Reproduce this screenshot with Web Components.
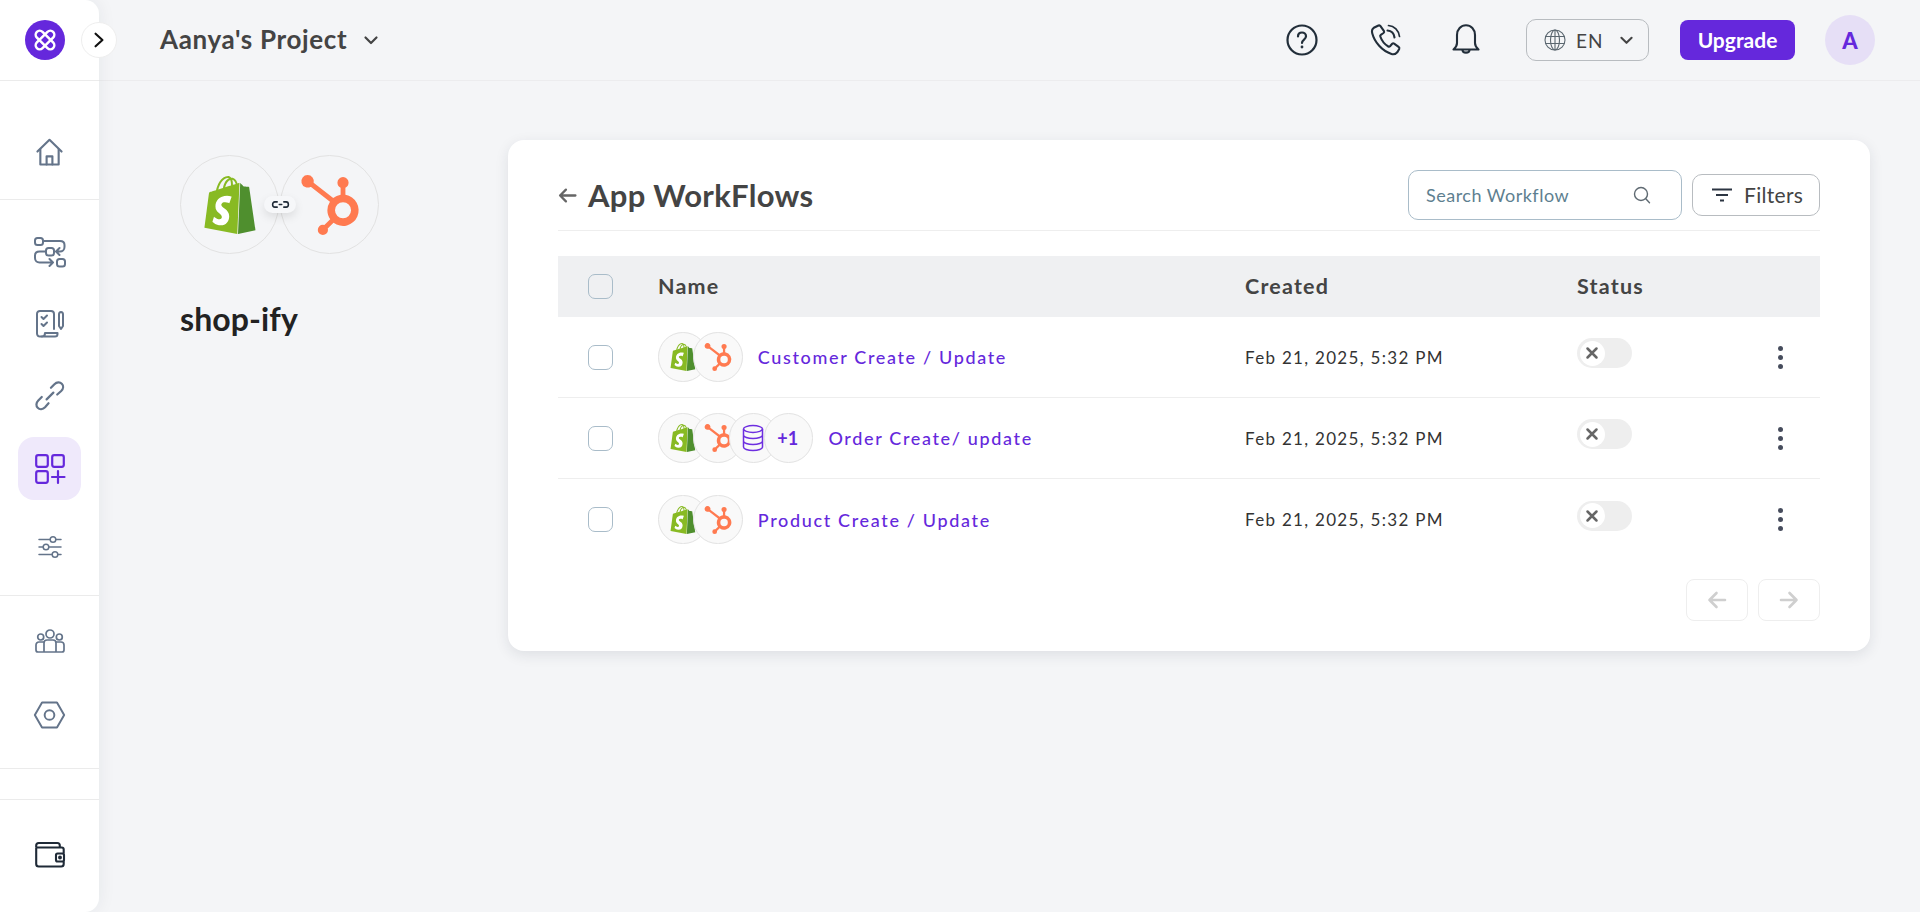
<!DOCTYPE html>
<html lang="en">
<head>
<meta charset="utf-8">
<title>App WorkFlows</title>
<style>
html,body{margin:0;padding:0;height:912px;background:#f4f5f7;overflow:hidden;font-family:"Lato","Liberation Sans",sans-serif;}
</style>
</head>
<body>
<app-shell>
  <side-nav slot="nav"></side-nav>
  <top-bar slot="top"></top-bar>
  <app-summary slot="aside" name="shop-ify"></app-summary>
  <workflow-card slot="main">
    <workflow-row name="Customer Create / Update" created="Feb 21, 2025, 5:32 PM" apps="shopify,hubspot"></workflow-row>
    <workflow-row name="Order Create/ update" created="Feb 21, 2025, 5:32 PM" apps="shopify,hubspot,db,+1"></workflow-row>
    <workflow-row name="Product Create / Update" created="Feb 21, 2025, 5:32 PM" apps="shopify,hubspot" last></workflow-row>
  </workflow-card>
</app-shell>
<script>
const SHOP_DARK='M15.337 23.979l7.216-1.561s-2.604-17.613-2.625-17.73c-.018-.116-.114-.192-.211-.192s-1.929-.136-1.929-.136-1.275-1.274-1.439-1.411c-.045-.037-.075-.057-.121-.074l-.914 21.104h.023z';
const SHOP_S='M11.71 11.305s-.81-.424-1.774-.424c-1.447 0-1.504.906-1.504 1.141 0 1.232 3.24 1.715 3.24 4.629 0 2.295-1.44 3.76-3.406 3.76-2.354 0-3.54-1.465-3.54-1.465l.646-2.086s1.245 1.066 2.28 1.066c.675 0 .975-.545.975-.932 0-1.619-2.654-1.694-2.654-4.359-.034-2.237 1.571-4.416 4.827-4.416 1.257 0 1.875.361 1.875.361l-.945 2.715-.02.01z';
const SHOP_L='M11.17.83c.136 0 .271.038.405.135-.984.465-2.064 1.639-2.508 3.992-.656.213-1.293.405-1.889.578C7.697 3.75 8.951.84 11.17.84V.83zm1.235 2.949v.135c-.754.232-1.583.484-2.394.736.466-1.777 1.333-2.645 2.085-2.971.193.501.309 1.176.309 2.1zm.539-2.234c.694.074 1.141.867 1.429 1.755-.349.114-.735.231-1.158.366v-.252c0-.752-.096-1.371-.271-1.871v.002zm2.992 1.289c-.02 0-.06.021-.078.021s-.289.075-.714.21c-.423-1.233-1.176-2.37-2.508-2.37h-.115C12.135.209 11.669 0 11.265 0 8.159 0 6.675 3.877 6.21 5.846c-1.194.365-2.063.636-2.16.674-.675.213-.694.232-.772.87-.075.462-1.83 14.063-1.83 14.063L15.009 24l.927-21.166z';
const HUB='M18.164 7.93V5.084a2.198 2.198 0 001.267-1.978v-.067A2.2 2.2 0 0017.238.845h-.067a2.2 2.2 0 00-2.193 2.193v.067a2.196 2.196 0 001.252 1.973l.013.006v2.852a6.22 6.22 0 00-2.969 1.31l.012-.009-7.828-6.096a2.497 2.497 0 10-1.157 1.52l-.012.006 7.696 5.991a6.176 6.176 0 00-1.038 3.446c0 1.343.425 2.588 1.147 3.607l-.013-.02-2.342 2.343a1.968 1.968 0 00-.58-.095h-.002a2.033 2.033 0 102.033 2.033 1.978 1.978 0 00-.1-.595l.005.014 2.317-2.317a6.247 6.247 0 104.782-11.134l-.036-.005zm-.964 9.378a3.206 3.206 0 113.215-3.207v.002a3.206 3.206 0 01-3.207 3.207z';
const ICONS={
 shopify:`<svg viewBox="0 0 24 24"><path fill="#fff" d="${SHOP_S}"/><path fill="#88BA23" d="${SHOP_S}${SHOP_L}"/><path fill="#4F8F2E" d="${SHOP_DARK}"/></svg>`,
 hubspot:`<svg viewBox="0 0 24 24"><path fill="#FF7A50" d="${HUB}"/></svg>`,
 db:`<svg viewBox="0 0 22 28" fill="none" stroke="#6d2ee0" stroke-width="1.5"><ellipse cx="11" cy="5" rx="9.5" ry="3.4"/><path d="M1.5 5v18c0 2 4.2 3.6 9.5 3.6s9.5-1.6 9.5-3.6V5M1.5 11c0 2 4.2 3.6 9.5 3.6s9.5-1.6 9.5-3.6M1.5 17c0 2 4.2 3.6 9.5 3.6s9.5-1.6 9.5-3.6"/></svg>`,
 logo:`<svg viewBox="0 0 40 40"><circle cx="20" cy="20" r="20" fill="#6528dc"/><g fill="none" stroke="#fff" stroke-width="2.5"><rect x="8.5" y="16" width="23" height="8" rx="4" transform="rotate(45 20 20)"/><rect x="8.5" y="16" width="23" height="8" rx="4" transform="rotate(-45 20 20)"/></g></svg>`,
 home:`<svg viewBox="0 0 28 30" fill="none" stroke="#64748a" stroke-width="2.2" stroke-linejoin="round" stroke-linecap="round"><path d="M1.5 14L14 1.8 26.5 14"/><path d="M4.5 12v15.5h19V12"/><path d="M11 27.5v-8.5h6v8.5"/></svg>`,
 flow:`<svg viewBox="0 0 32 30" fill="none" stroke="#64748a" stroke-width="2" stroke-linejoin="round" stroke-linecap="round"><rect x="1" y="1" width="8" height="7" rx="2.5"/><path d="M9 4h17c2.5 0 4.5 1.5 4.5 4v2c0 2.7-2 4.5-4.5 4.5h-3M25.5 11l-3.5 3.5 3.5 3.500"/><rect x="12" y="11" width="8" height="7.5" rx="2.5"/><path d="M12 14.500H5.500C3 14.500 1 16 1 18.500V21c0 2.800 2 4.500 4.500 4.500H19M15.500 22l3.500 3.500-3.500 3.500"/><rect x="23" y="22" width="8" height="7.5" rx="2.5"/></svg>`,
 tasks:`<svg viewBox="0 0 28 29" fill="none" stroke="#64748a" stroke-width="2" stroke-linejoin="round" stroke-linecap="round"><path d="M6 27.500H4c-1.800 0-3-1.200-3-3V5c0-1.800 1.200-3 3-3h11c1.800 0 3 1.200 3 3v15"/><path d="M5.500 8l2 2 3.500-3.500M5.500 15l2 2 3.500-3.500"/><path d="M6 27.500c2 0 3-1.200 3-3.500h12.500v1c0 1.500-1 2.500-2.500 2.500z"/><path d="M23 5.500c0-1.500 1-2.500 2-2.500s2 1 2 2.500v11.500l-2 3-2-3z"/></svg>`,
 link:`<svg viewBox="0 0 30 30" fill="none" stroke="#64748a" stroke-width="2.300" stroke-linecap="round"><path d="M12 19l7-7"/><path d="M16.500 7l3.600-3.600c2.500-2.500 5.800-2.400 7.600-.6 2 2 1.800 5.200-.6 7.600L23 14"/><path d="M7 16.500l-3.600 3.600c-2.500 2.500-2.400 5.800-.6 7.600 2 2 5.200 1.800 7.600-.6L14 23"/></svg>`,
 apps:`<svg viewBox="0 0 30 30" fill="none" stroke="#6528dc" stroke-width="2.200" stroke-linecap="round" stroke-linejoin="round"><rect x="1.200" y="1.200" width="11.600" height="11.600" rx="2"/><rect x="17.200" y="1.200" width="11.600" height="11.600" rx="2"/><rect x="1.200" y="17.200" width="11.600" height="11.600" rx="2"/><path d="M23 17v12M17 23h12.500"/></svg>`,
 sliders:`<svg viewBox="0 0 24 22" fill="none" stroke="#64748a" stroke-width="1.500" stroke-linecap="round"><path d="M1 3.500h11M18 3.500h5M1 11h4M11 11h12M1 18.500h13M20 18.500h3"/><circle cx="15" cy="3.500" r="2.800"/><circle cx="8" cy="11" r="2.800"/><circle cx="17" cy="18.500" r="2.800"/></svg>`,
 team:`<svg viewBox="0 0 30 24" fill="none" stroke="#64748a" stroke-width="1.700" stroke-linejoin="round"><circle cx="15" cy="5" r="4"/><circle cx="5.700" cy="8" r="3"/><circle cx="24.300" cy="8" r="3"/><path d="M9 23v-9c0-1.500 1-3 3-3h6c2 0 3 1.500 3 3v9"/><path d="M9 13H4c-1.800 0-3 1.200-3 3v5c0 1.300.8 2 2 2h24c1.200 0 2-.7 2-2v-5c0-1.800-1.200-3-3-3h-5"/></svg>`,
 hex:`<svg viewBox="0 0 34 30" fill="none" stroke="#64748a" stroke-width="2.100" stroke-linejoin="round"><path d="M1.300 15L9 1.500h16L32.700 15 25 28.500H9z"/><circle cx="17" cy="15" r="5.200"/></svg>`,
 wallet:`<svg viewBox="0 0 30 26" fill="none" stroke="#1f2a37" stroke-width="2.100" stroke-linejoin="round"><path d="M1.200 5.500V3.500C1.200 2 2.200 1 3.700 1h18.600c1.500 0 2.500 1 2.500 2.500v2"/><path d="M1.200 5.500h25.500c1.200 0 2 .8 2 2v4M28.700 19.500V22c0 1.500-1 2.500-2.500 2.500H3.700c-1.500 0-2.500-1-2.500-2.500V5.500"/><rect x="21" y="11.500" width="8" height="8" rx="1.500"/><circle cx="25" cy="15.500" r=".9" fill="#1f2a37"/></svg>`,
 help:`<svg viewBox="0 0 32 32" fill="none" stroke="#222e3a" stroke-width="2.200" stroke-linecap="round"><circle cx="16" cy="16" r="14.500"/><path d="M12 12.500c0-2.500 1.800-4 4-4s4 1.500 4 3.800c0 3.300-4 3.200-4 6.700"/><circle cx="16" cy="23" r=".6" fill="#222e3a" stroke-width="1.600"/></svg>`,
 phone:`<svg viewBox="0 0 30 32" fill="none" stroke="#222e3a" stroke-width="2.100" stroke-linejoin="round" stroke-linecap="round"><path d="M7.500 1.500L2.800 3.800C1 5 .6 7 1.300 9.500 3.500 18 11 27 20.500 30c2.500.8 4.500-.2 6-2l1.700-3c.4-.9.200-1.500-.6-2.100l-4.500-3.300c-.7-.5-1.300-.4-1.900.2l-2.200 2.500c-.5.500-1 .6-1.700.2-3-1.800-6.700-6.200-8-10-.3-.8-.1-1.300.5-1.700l2.700-1.800c.7-.5.8-1.100.5-1.900L9.500 2.200c-.4-.8-1.200-1.100-2-.7z"/><path d="M16.500 6.500c3.800.3 6.500 3 7 7"/><path d="M17.500 1.500c5.800.5 10.300 5 11 11" stroke-width="1.700"/></svg>`,
 bell:`<svg viewBox="0 0 28 32" fill="none" stroke="#222e3a" stroke-width="2.100" stroke-linejoin="round" stroke-linecap="round"><path d="M1.500 25.500c2-1.700 3.500-3.500 3.500-6.500v-8C5 5.500 9 1.200 14 1.200S23 5.500 23 11v8c0 3 1.500 4.800 3.500 6.500z"/><path d="M10.500 26c0 3.500 7 3.500 7 0"/></svg>`,
 globe:`<svg viewBox="0 0 22 22" fill="none" stroke="#5b6770" stroke-width="1.100"><circle cx="11" cy="11" r="10"/><ellipse cx="11" cy="11" rx="4.500" ry="10"/><path d="M11 1v20M1.500 7.500h19M1.500 14.500h19"/></svg>`,
 chev:`<svg viewBox="0 0 14 9" fill="none" stroke="#444" stroke-width="2.200" stroke-linecap="round" stroke-linejoin="round"><path d="M1.500 1.500L7 7l5.500-5.500"/></svg>`,
 right:`<svg viewBox="0 0 10 14" fill="none" stroke="#111" stroke-width="1.900" stroke-linecap="round" stroke-linejoin="round"><path d="M2 1.500L8 7l-6 5.500"/></svg>`,
 back:`<svg viewBox="0 0 18 14" fill="none" stroke="#666" stroke-width="2.200" stroke-linecap="round" stroke-linejoin="round"><path d="M16.500 7H2M7.500 1.500L2 7l5.500 5.500"/></svg>`,
 search:`<svg viewBox="0 0 18 18" fill="none" stroke="#5f6a72" stroke-width="1.400" stroke-linecap="round"><circle cx="8" cy="8" r="6.500"/><path d="M12.800 12.800L16.500 16.800"/></svg>`,
 filter:`<svg viewBox="0 0 20 14" fill="none" stroke="#2c3542" stroke-width="2"><path d="M0 1.500h20M4 7h12M8 12.500h4"/></svg>`,
 unlink:`<svg viewBox="0 0 20 8" fill="none" stroke="#1f2a37" stroke-width="1.800" stroke-linecap="round"><path d="M6.200 1H3.500C1.900 1 1 2.400 1 4s.9 3 2.500 3h2.700M13.800 1h2.700C18.100 1 19 2.400 19 4s-.9 3-2.500 3h-2.700M8.600 4h2.800"/></svg>`,
 x:`<svg viewBox="0 0 12 12" fill="none" stroke="#666" stroke-width="2.500" stroke-linecap="round"><path d="M1.500 1.500l9 9M10.500 1.500l-9 9"/></svg>`,
 pprev:`<svg viewBox="0 0 20 18" fill="none" stroke="#cfcfcf" stroke-width="2.600" stroke-linecap="round" stroke-linejoin="round"><path d="M18 9H2.500M9.500 2L2.500 9l7 7"/></svg>`,
 pnext:`<svg viewBox="0 0 20 18" fill="none" stroke="#cfcfcf" stroke-width="2.600" stroke-linecap="round" stroke-linejoin="round"><path d="M2 9h15.500M10.500 2l7 7-7 7"/></svg>`
};
function def(name,html){
  class E extends HTMLElement{
    constructor(){super();this.attachShadow({mode:'open'});}
    connectedCallback(){this.shadowRoot.innerHTML=typeof html==='function'?html(this):html;}
  }
  customElements.define(name,E);
}
const ic=(n,w,h)=>`<ui-icon name="${n}" style="width:${w}px;height:${h||w}px"></ui-icon>`;
def('ui-icon',el=>`<style>:host{display:inline-flex;flex:none;line-height:0}svg{width:100%;height:100%;display:block;overflow:visible}</style>${ICONS[el.getAttribute('name')]||''}`);

def('app-shell',`<style>
:host{display:flex;width:1920px;height:912px;background:#f4f5f7;color:#444;font-family:"Lato","Liberation Sans",sans-serif}
.col{flex:1;display:flex;flex-direction:column;min-width:0}
.content{flex:1;display:flex;align-items:flex-start;padding:59px 50px 0 81px}
</style>
<slot name="nav"></slot>
<div class="col"><slot name="top"></slot><div class="content"><slot name="aside"></slot><slot name="main"></slot></div></div>`);

def('nav-item',el=>{const a=el.hasAttribute('active');return `<style>
:host{display:flex;align-items:center;justify-content:center;height:${el.getAttribute('h')}px;flex:none}
.tile{display:flex;align-items:center;justify-content:center;width:${a?'63px':'auto'};height:${a?'63px':'auto'};border-radius:16px;background:${a?'#efe9fb':'transparent'}}
</style><div class="tile"><slot></slot></div>`});

def('side-nav',`<style>
:host{display:flex;flex-direction:column;width:99px;height:912px;flex:none;background:#fff;border-radius:0 14px 14px 0;box-shadow:0 0 18px rgba(30,40,60,.07);position:relative;z-index:2;box-sizing:border-box}
.brand{height:80px;flex:none;display:flex;align-items:center;padding-left:25px;box-sizing:border-box}
section{border-top:1.500px solid #ebebeb;display:flex;flex-direction:column;flex:none;box-sizing:border-box}
.toggle{position:absolute;left:81px;top:22px;width:36px;height:36px;border-radius:50%;background:#fff;border:1px solid #eeeeee;box-sizing:border-box;display:flex;align-items:center;justify-content:center}
.s1{height:119px;padding-top:41px}
.s2{height:396px;padding-top:17px}
.s3{height:173px}
.s4{height:31px}
.s5{flex:1}
</style>
<div class="brand">${ic('logo',40)}</div>
<div class="toggle">${ic('right',12,16)}</div>
<section class="s1"><nav-item h="60">${ic('home',27,29)}</nav-item></section>
<section class="s2">
<nav-item h="70">${ic('flow',32,30)}</nav-item>
<nav-item h="72">${ic('tasks',28,29)}</nav-item>
<nav-item h="72">${ic('link',29,29)}</nav-item>
<nav-item h="75" active>${ic('apps',30,30)}</nav-item>
<nav-item h="82">${ic('sliders',24,22)}</nav-item>
</section>
<section class="s3">
<nav-item h="90">${ic('team',30,24)}</nav-item>
<nav-item h="58">${ic('hex',33,28)}</nav-item>
</section>
<section class="s4"></section>
<section class="s5"><nav-item h="110">${ic('wallet',30,26)}</nav-item></section>`);

def('top-bar',`<style>
:host{display:flex;align-items:center;height:81px;box-sizing:border-box;border-bottom:1.500px solid #ececee;padding:0 45px 0 61px;flex:none}
.title{font-size:26px;font-weight:700;color:#444;letter-spacing:.65px;white-space:nowrap;position:relative;top:-1px}
.tch{margin-left:17px;display:flex}
.sp{flex:1}
.i{width:40px;height:40px;display:flex;align-items:center;justify-content:center}
.help{margin-right:44px}.phone{margin-right:40px}.bell{margin-right:40px}
.lang{display:flex;align-items:center;width:123px;height:42px;box-sizing:border-box;border:1px solid #b8bcc0;border-radius:10px;padding-left:17px;font-size:19px;color:#444}
.lang span{margin-left:10px;letter-spacing:1px}
.lang .c{margin-left:17px;display:flex}
.up{margin-left:31px;width:115px;height:40px;border-radius:8px;background:#6528dc;color:#fff;font-size:21px;font-weight:700;display:flex;align-items:center;justify-content:center;box-sizing:border-box;padding-bottom:2px}
.av{margin-left:30px;width:50px;height:50px;border-radius:50%;background:#e6dff6;color:#6528dc;font-weight:900;font-size:22px;display:flex;align-items:center;justify-content:center}
</style>
<div class="title">Aanya's Project</div><div class="tch">${ic('chev',14,9)}</div><div class="sp"></div>
<div class="i help">${ic('help',32,32)}</div>
<div class="i phone">${ic('phone',30,32)}</div>
<div class="i bell">${ic('bell',28,32)}</div>
<div class="lang">${ic('globe',22,22)}<span>EN</span><div class="c">${ic('chev',13,9)}</div></div>
<div class="up">Upgrade</div>
<div class="av">A</div>`);

def('app-badge',el=>{const d=+el.getAttribute('d'),s=+el.getAttribute('s'),app=el.getAttribute('app'),db=app==='db';return `<style>
:host{display:flex;flex:none;width:${d}px;height:${d}px;box-sizing:border-box;border-radius:50%;border:1px solid #e2e2e2;align-items:center;justify-content:center;background:${el.hasAttribute('flat')?'transparent':'#f9f9f9'};color:#6528dc;font-size:18px;font-weight:700;padding-right:${app==='+1'?2:0}px;position:relative}
</style>${ICONS[app]?ic(app,db?22:s,db?28:s):app}`});

def('app-summary',el=>`<style>
:host{display:block;width:328px;flex:none;padding-top:15px;box-sizing:border-box}
.pair{display:flex;align-items:center;gap:1px;position:relative;width:199px}
.pill{position:absolute;left:84px;top:41px;width:32px;height:17px;border-radius:9px;background:#f6f7f9;box-shadow:0 4px 10px rgba(0,0,0,.1);display:flex;align-items:center;justify-content:center}
h1{margin:45px 0 0;font-size:32px;line-height:40px;font-weight:700;color:#222;letter-spacing:.1px}
</style>
<div class="pair"><app-badge flat d="99" s="58" app="shopify"></app-badge><app-badge flat d="99" s="60" app="hubspot"></app-badge><div class="pill">${ic('unlink',19,7)}</div></div>
<h1>${el.getAttribute('name')}</h1>`);

def('ui-check',`<style>:host{display:block;width:25px;height:25px;box-sizing:border-box;border:1px solid #a9bcc9;border-radius:7px;background:var(--cb,#fff)}</style>`);

def('workflow-card',`<style>
:host{display:block;flex:1;height:511px;box-sizing:border-box;background:#fff;border-radius:16px;box-shadow:0 4px 14px rgba(30,40,60,.10);padding:0 50px}
header{display:flex;align-items:center;height:91px;box-sizing:border-box;padding-top:20px;border-bottom:1.500px solid #eeeeee}
.back{display:flex;margin-right:11px}
h2{margin:0;font-size:31px;font-weight:700;color:#444;letter-spacing:.3px}
.sp{flex:1}
.search{display:flex;align-items:center;justify-content:space-between;width:274px;height:50px;box-sizing:border-box;border:1px solid #a9bcc9;border-radius:10px;padding:0 30px 0 17px;font-size:18px;color:#5e7f90;letter-spacing:.5px}
.filter{margin-left:10px;display:flex;align-items:center;width:128px;height:42px;box-sizing:border-box;border:1px solid #b8bcc0;border-radius:10px;padding-left:19px;font-size:21px;color:#444;letter-spacing:.3px}
.filter span{margin-left:12px;position:relative;top:-1px}
.head{margin-top:25px;display:grid;grid-template-columns:100px 587px 332px 1fr;align-items:center;height:61px;background:#eff0f2;font-size:21.500px;font-weight:700;color:#444;letter-spacing:1.2px;--cb:#eff0f2}
.head div{position:relative;top:-1px}
.head ui-check{margin-left:30px}
.pager{display:flex;justify-content:flex-end;gap:10px;margin-top:19px}
.pager div{width:62px;height:42px;box-sizing:border-box;border:1px solid #eeeeee;border-radius:8px;display:flex;align-items:center;justify-content:center}
</style>
<header><div class="back">${ic('back',19,15)}</div><h2>App WorkFlows</h2><div class="sp"></div>
<div class="search">Search Workflow${ic('search',18,18)}</div>
<div class="filter">${ic('filter',20,14)}<span>Filters</span></div></header>
<div class="head"><ui-check></ui-check><div>Name</div><div>Created</div><div>Status</div></div>
<slot></slot>
<div class="pager"><div>${ic('pprev',20,18)}</div><div>${ic('pnext',20,18)}</div></div>`);

def('workflow-row',el=>{
 const apps=el.getAttribute('apps').split(',');
 return `<style>
:host{display:grid;grid-template-columns:100px 587px 332px 201px 1fr;align-items:center;height:81px;box-sizing:border-box;${el.hasAttribute('last')?'':'border-bottom:1.500px solid #eeeeee;'}}
ui-check{margin-left:30px}
.name{display:flex;align-items:center}
.stack{display:flex;padding-right:15px}
.stack app-badge+app-badge{margin-left:-14.2px}
a{color:#6528dc;font-size:18px;font-weight:500;letter-spacing:1.65px;white-space:nowrap;text-decoration:none}
.date{font-size:17px;color:#333;letter-spacing:1.3px;white-space:nowrap}
.tg{position:relative;width:55px;height:30px;border-radius:15px;background:#eeeeee;top:-4px}
.kn{position:absolute;left:2.500px;top:2.500px;width:25px;height:25px;border-radius:50%;background:#fff;display:flex;align-items:center;justify-content:center}
.menu{display:flex;flex-direction:column;gap:4px;width:5px}
.menu i{width:5px;height:5px;border-radius:50%;background:#464c5c;display:block}
</style>
<ui-check></ui-check>
<div class="name"><div class="stack">${apps.map(a=>`<app-badge d="49.500" s="28" app="${a}"></app-badge>`).join('')}</div><a>${el.getAttribute('name')}</a></div>
<div class="date">${el.getAttribute('created')}</div>
<div><div class="tg"><div class="kn">${ic('x',12,12)}</div></div></div>
<div class="menu"><i></i><i></i><i></i></div>`;
});
</script>
</body>
</html>
